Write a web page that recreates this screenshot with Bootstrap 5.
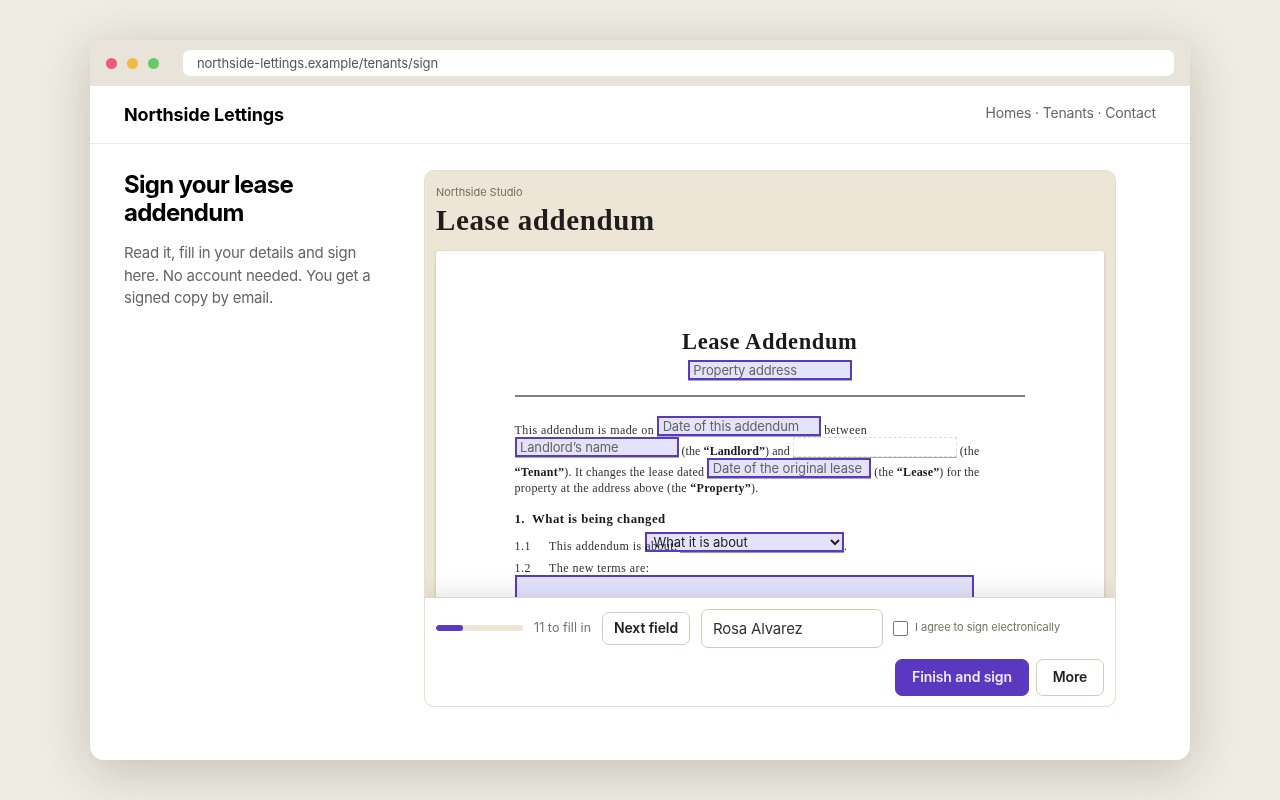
<!DOCTYPE html>
<html lang="en">
<head>
<meta charset="utf-8">
<meta name="viewport" content="width=device-width, initial-scale=1">
<title>Northside Lettings</title>
<link href="https://cdn.jsdelivr.net/npm/bootstrap@5.3.0/dist/css/bootstrap.min.css" rel="stylesheet">
<style>
body{background:#efece4;font-family:Inter,"Liberation Sans",sans-serif;color:#000;height:800px;overflow:hidden}
.window{width:1100px;height:720px;border-radius:14px;box-shadow:0 10px 50px rgba(40,35,20,.22)}
.chrome{height:46px;background:#e8e4d9;padding:0 16px;gap:10px}
.dot{width:11px;height:11px}
.addr{height:26px;border-radius:7px;margin-left:14px;padding:1px 14px 0;font-size:13px;letter-spacing:-.09px;color:#555}
.site{height:58px;padding:0 34px;border-bottom:1px solid #ececec}
.brand{font-size:18px;letter-spacing:-.15px;line-height:1}
.links{font-size:14px;color:#666;letter-spacing:-.17px;padding-bottom:4px}
.main{padding:26px 34px 0}
.side{width:300px}
.side h1{font-size:24px;line-height:28px;font-weight:700;letter-spacing:-.72px;margin:1px 0 15px}
.side p{font-size:15px;line-height:22.5px;color:#666;letter-spacing:-.25px}
.panel{width:692px;height:537px;border:1px solid #e5dfcf;border-radius:10px;background:#ede5d5}
.panel-top{height:80px;padding:14px 11px 0}
.studio{font-size:11px;line-height:14px;color:#777060;letter-spacing:-.04px}
.serif{font-family:"Liberation Serif",serif}
.doc-name{font-size:29px;line-height:34px;font-weight:700;letter-spacing:.6px;color:#1f1e1a;margin-top:4px}
.viewer{height:346px;padding:0 11px}
.paper{height:420px;border-radius:3px;box-shadow:0 1px 3px rgba(90,75,40,.28);padding:0 79px 0 78.5px;color:#303030;font-size:12px;letter-spacing:.3px}
.paper b{color:#1a1a1e}
.doc-title{font-size:22.5px;line-height:26px;letter-spacing:.6px;padding-top:78px;color:#1a1a1e}
.field{width:164px;height:20px;border:2px solid #5a3ac0;background:#e4e3fc;font:13px/17px Inter,sans-serif;letter-spacing:-.15px;color:#66645f;padding-left:3.5px;box-shadow:0 1px #aaa;flex:none;white-space:nowrap}
.field.done{background:#fff;border:1px dashed #e2dccb}
.rule{height:2px;background:#808080;margin:15px 0 19px}
.copy{height:21.2px;white-space:nowrap;gap:3px}
.copy>span:not(.field){padding-top:5.5px;line-height:16px}
.c1{letter-spacing:.43px}
.c2 .s2{letter-spacing:.08px}
.c3{letter-spacing:.17px}
.c3 .s3{letter-spacing:.26px}
.c4{margin-top:-1px;margin-bottom:10px}
.c5{font-size:12.8px;letter-spacing:.45px}
.c6{margin-top:2px}
.c6,.c7{letter-spacing:.46px}
.pick{left:130px;top:-1px;width:199px;color:#222;box-shadow:none;padding-left:7px;letter-spacing:-.08px;mix-blend-mode:multiply}
.pick svg{right:2px;top:5px}
.answer{width:459px;height:60px;border:2px solid #5a3ac0;background:#e4e3fc}
.num{width:31.5px}
.dotend{position:relative;margin-left:163px}
.blank{left:165px;top:19px;width:164px;height:1px;background:#999}
.actions{height:110px;border-top:1px solid #ddd6c4;border-radius:0 0 9px 9px;padding:11px;box-shadow:0 -6px 20px rgba(30,30,50,.1)}
.progress{width:87px;height:6px;background:#ede5d5;--bs-progress-bar-bg:#5a3ac0;margin-top:-1px}
.progress-bar{border-radius:3px}
.left{font-size:12.5px;color:#777269;width:57px;margin:-1px 11px 0;letter-spacing:.06px;white-space:nowrap}
.btn{border:1px solid #d6cbb8;font-size:14px;font-weight:600;color:#222;padding:0 0 2px;border-radius:7px;line-height:1;white-space:nowrap;letter-spacing:-.1px}
.btn-next{width:88px;height:33px;margin:-1px 11px 0 0;padding-bottom:1px}
.sig{width:182px;height:39px;border:1px solid #d6cbb8;border-radius:7px;font-size:15px;color:#333;padding:0 12px 1px 11px;box-shadow:none;letter-spacing:-.2px}
.consent{margin-left:10px;gap:7px;font-size:11px;color:#777062;letter-spacing:-.03px}
.consent span{margin-top:-3px}
.consent .form-check-input{width:15px;height:15px;margin:0;border:1px solid #777;border-radius:2px}
.btn-finish{width:134px;height:37px;background:#5a39c0;border-color:#5a39c0;color:#eee9ff}
.btn-more{width:68px;height:37px}
.btns{margin-top:11px;gap:7px}
</style>
<script src="https://cdn.jsdelivr.net/npm/bootstrap@5.3.0/dist/js/bootstrap.bundle.min.js"></script>
</head>
<body>
<div class="d-flex justify-content-center pt-4">
<div class="window bg-white overflow-hidden mt-3">
  <div class="chrome d-flex align-items-center">
    <span class="dot rounded-circle" style="background:#f05877"></span>
    <span class="dot rounded-circle" style="background:#f0bb43"></span>
    <span class="dot rounded-circle" style="background:#65cc65"></span>
    <div class="addr bg-white flex-grow-1 d-flex align-items-center"><span>northside-lettings.example/tenants/sign</span></div>
  </div>
  <header class="site d-flex align-items-center justify-content-between">
    <div class="brand fw-bold">Northside Lettings</div>
    <nav class="links">Homes · Tenants · Contact</nav>
  </header>
  <main class="main d-flex">
    <section class="side">
      <h1>Sign your lease<br>addendum</h1>
      <p>Read it, fill in your details and sign<br>here. No account needed. You get a<br>signed copy by email.</p>
    </section>
    <section class="panel overflow-hidden">
      <div class="panel-top">
        <div class="studio">Northside Studio</div>
        <div class="doc-name serif">Lease addendum</div>
      </div>
      <div class="viewer">
        <article class="paper serif bg-white">
          <div class="doc-title fw-bold text-center">Lease Addendum</div>
          <div class="field mx-auto" style="margin-top:5px">Property address</div>
          <div class="rule"></div>
          <div class="copy d-flex c1"><span class="s1">This addendum is made on</span><span class="field">Date of this addendum</span><span>between</span></div>
          <div class="copy d-flex c2"><span class="field">Landlord’s name</span><span class="s2">(the <b>“Landlord”</b>) and</span><span class="field done"></span><span>(the</span></div>
          <div class="copy d-flex c3"><span class="s3"><b>“Tenant”</b>). It changes the lease dated</span><span class="field">Date of the original lease</span><span>(the <b>“Lease”</b>) for the</span></div>
          <div class="copy c4">property at the address above (the <b>“Property”</b>).</div>
          <div class="copy c5"><b>1.&nbsp; What is being changed</b></div>
          <div class="copy c6 d-flex position-relative"><span class="num">1.1</span><span class="s6">This addendum is about:</span><span class="dotend">.</span>
            <i class="blank position-absolute"></i>
            <div class="field pick position-absolute">What it is about<svg class="position-absolute" width="10" height="7" viewBox="0 0 10 7" fill="none" stroke="#222" stroke-width="2"><path d="M1 1l4 4 4-4"/></svg></div>
          </div>
          <div class="copy c7 d-flex"><span class="num">1.2</span><span>The new terms are:</span></div>
          <div class="answer"></div>
        </article>
      </div>
      <footer class="actions bg-white position-relative">
        <div class="d-flex align-items-center">
          <div class="progress"><div class="progress-bar" style="width:31%"></div></div>
          <span class="left">11 to fill in</span>
          <button class="btn btn-next bg-white">Next field</button>
          <input class="form-control sig" value="Rosa Alvarez" aria-label="Full name">
          <label class="consent d-flex align-items-center"><input class="form-check-input" type="checkbox"><span>I agree to sign electronically</span></label>
        </div>
        <div class="btns d-flex justify-content-end">
          <button class="btn btn-finish">Finish and sign</button>
          <button class="btn btn-more bg-white">More</button>
        </div>
      </footer>
    </section>
  </main>
</div>
</div>
</body>
</html>
